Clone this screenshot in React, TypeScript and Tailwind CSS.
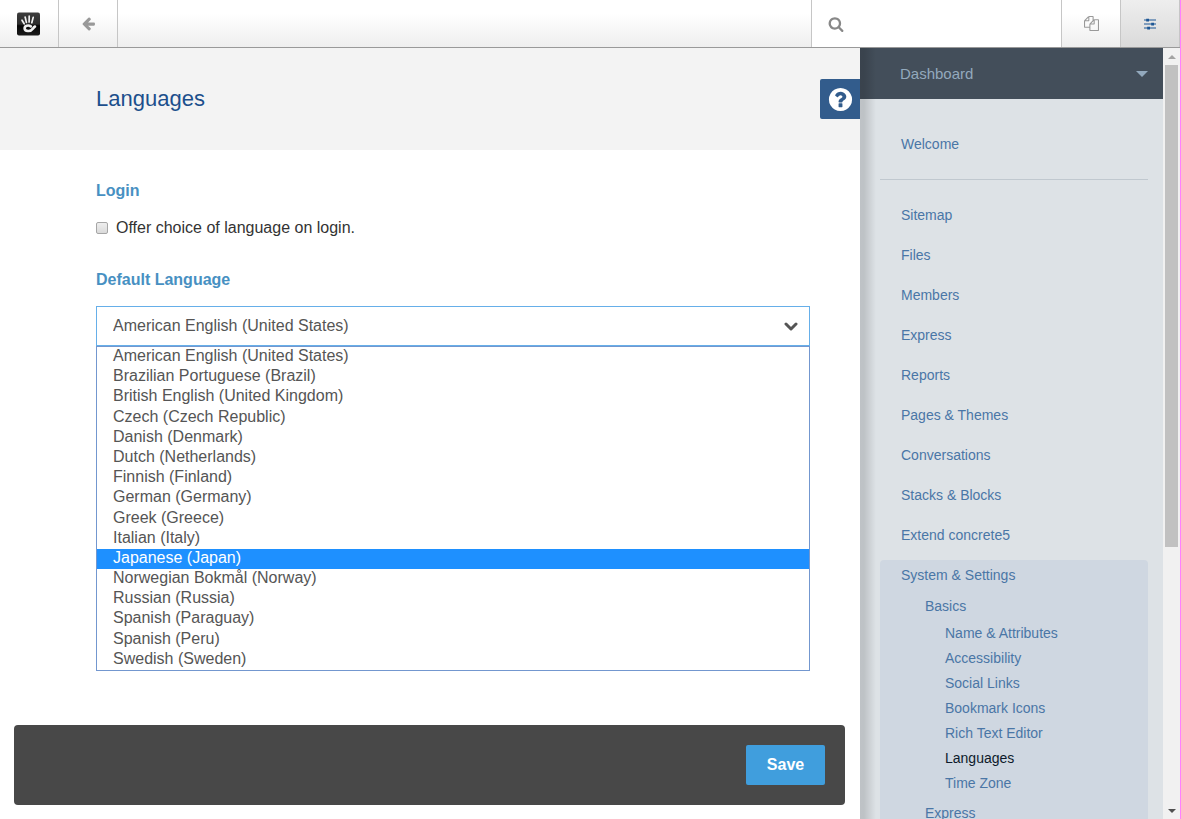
import { useState } from "react"
import type { ReactNode } from "react"

const languages = [
  "American English (United States)",
  "Brazilian Portuguese (Brazil)",
  "British English (United Kingdom)",
  "Czech (Czech Republic)",
  "Danish (Denmark)",
  "Dutch (Netherlands)",
  "Finnish (Finland)",
  "German (Germany)",
  "Greek (Greece)",
  "Italian (Italy)",
  "Japanese (Japan)",
  "Norwegian Bokmål (Norway)",
  "Russian (Russia)",
  "Spanish (Paraguay)",
  "Spanish (Peru)",
  "Swedish (Sweden)",
]

const sections = [
  "Sitemap",
  "Files",
  "Members",
  "Express",
  "Reports",
  "Pages & Themes",
  "Conversations",
  "Stacks & Blocks",
  "Extend concrete5",
]

const basics = [
  "Name & Attributes",
  "Accessibility",
  "Social Links",
  "Bookmark Icons",
  "Rich Text Editor",
  "Languages",
  "Time Zone",
]

const Icon = ({ d, className }: { d: string; className: string }) => (
  <svg viewBox="0 0 1792 1792" fill="currentColor" className={className} aria-hidden="true">
    <path d={d} />
  </svg>
)

const arrowLeft =
  "M1664 896v128q0 53-32.5 90.5t-84.5 37.5h-704l293 294q38 36 38 90t-38 90l-75 76q-37 37-90 37-52 0-91-37l-651-652q-37-37-37-90 0-52 37-91l651-650q38-38 91-38 52 0 90 38l75 74q38 38 38 91t-38 91l-293 293h704q52 0 84.5 37.5t32.5 90.5z"
const search =
  "M1216 832q0-185-131.5-316.5t-316.5-131.5-316.5 131.5-131.5 316.5 131.5 316.5 316.5 131.5 316.5-131.5 131.5-316.5zm512 832q0 52-38 90t-90 38q-54 0-90-38l-343-342q-179 124-399 124-143 0-273.5-55.5t-225-150-150-225-55.5-273.5 55.5-273.5 150-225 225-150 273.5-55.5 273.5 55.5 225 150 150 225 55.5 273.5q0 220-124 399l343 343q37 37 37 90z"
const files =
  "M1696 384q40 0 68 28t28 68v1216q0 40-28 68t-68 28h-960q-40 0-68-28t-28-68v-288h-544q-40 0-68-28t-28-68v-672q0-40 20-88t48-76l408-408q28-28 76-48t88-20h416q40 0 68 28t28 68v328q68-40 128-40h416zm-544 213l-299 299h299v-299zm-640-384l-299 299h299v-299zm196 647l316-316v-416h-384v416q0 40-28 68t-68 28h-416v640h512v-256q0-40 20-88t48-76zm956 804v-1152h-384v416q0 40-28 68t-68 28h-416v640h896z"
const question =
  "M1024 1376v-192q0-14-9-23t-23-9h-192q-14 0-23 9t-9 23v192q0 14 9 23t23 9h192q14 0 23-9t9-23zm256-672q0-88-55.5-163t-138.5-116-170-41q-243 0-371 213-15 24 8 42l132 100q7 6 19 6 16 0 25-12 53-68 86-92 34-24 86-24 48 0 85.5 26t37.5 59q0 38-20 61t-68 45q-63 28-115.5 86.5t-52.5 125.5v36q0 14 9 23t23 9h192q14 0 23-9t9-23q0-19 21.5-49.5t54.5-49.5q32-18 49-28.5t46-35 44.5-48 28-60.5 12.5-81zm384 192q0 209-103 385.5t-279.5 279.5-385.5 103-385.5-103-279.5-279.5-103-385.5 103-385.5 279.5-279.5 385.5-103 385.5 103 279.5 279.5 103 385.5z"

const Logo = () => (
  <svg viewBox="0 0 24 24" className="size-6" aria-hidden="true">
    <defs>
      <linearGradient id="tile" x1="0" y1="0" x2="0" y2="1">
        <stop offset="0" stopColor="#3c3c3c" />
        <stop offset="0.5" stopColor="#2c2c2c" />
        <stop offset="0.58" stopColor="#050505" />
        <stop offset="1" stopColor="#1c1c1c" />
      </linearGradient>
    </defs>
    <rect y="0.5" width="23" height="23" rx="2" fill="url(#tile)" />
    <g fill="none" stroke="#f0f0f0" strokeLinecap="round">
      <path d="M5 8.2 7.2 11.8" strokeWidth="1.7" />
      <path d="M8.2 5.2 9.4 10.4" strokeWidth="1.7" />
      <path d="M12.2 4.2 12.1 10" strokeWidth="1.7" />
      <path d="M16.2 5.4 14.8 10.8" strokeWidth="1.7" />
      <path d="M13.8 14.4C11.6 12.8 7.6 13.4 7.6 16.2 7.7 19.7 13.6 20 15.8 16.8 16.5 15.6 17 15 18 14.5" strokeWidth="2.6" />
    </g>
  </svg>
)

const ToolbarButton = ({ label, className, children }: { label: string; className: string; children: ReactNode }) => (
  <button
    type="button"
    aria-label={label}
    className={`flex shrink-0 items-center justify-center border-[#c6c6c6] ${className}`}
  >
    {children}
  </button>
)

const Toolbar = () => (
  <header className="flex h-12 shrink-0 border-b border-[#999999] bg-linear-to-b from-white from-30% to-[#eeeeee]">
    <ToolbarButton label="concrete5" className="w-[59px] border-r">
      <Logo />
    </ToolbarButton>
    <ToolbarButton label="Back" className="w-[59px] border-r text-[#999999]">
      <Icon d={arrowLeft} className="size-[15px]" />
    </ToolbarButton>
    <div className="flex-1" />
    <label className="flex w-[250px] items-center border-l border-[#c6c6c6] bg-white pl-4 text-[#888888]">
      <Icon d={search} className="size-4 shrink-0" />
      <input type="search" aria-label="Search" className="ml-2 h-8 min-w-0 flex-1 outline-none" />
    </label>
    <ToolbarButton label="Pages" className="w-[59px] border-l text-[#999999]">
      <Icon d={files} className="size-[15px]" />
    </ToolbarButton>
    <ToolbarButton label="Dashboard" className="w-[60px] border-x bg-linear-to-b from-[#eeeeee] to-[#dadada] text-[#1c5695]">
      <svg viewBox="0 0 12 12" fill="currentColor" className="size-3" aria-hidden="true">
        <path d="M0 1.5h12v1.1H0zM0 5.5h12v1.1H0zM0 9.5h12v1.1H0z" />
        <path d="M2.2 .8h2.8v2.6H2.200zM7.200 4.8h2.800v2.600H7.200zM3.200 8.800h2.800v2.600H3.200z" />
      </svg>
    </ToolbarButton>
  </header>
)

const Sidebar = () => (
  <aside className="relative w-[303px] shrink-0 overflow-hidden bg-[#dde2e6] text-sm text-[#4a76a6]">
    <button
      type="button"
      className="flex h-[51px] w-full items-center justify-between bg-[#434e5a] pr-[15px] pl-10 text-[15px] text-[#93a9bd]"
    >
      Dashboard
      <svg viewBox="0 0 12 6" fill="currentColor" className="h-[6px] w-3" aria-hidden="true">
        <path d="M0 0h12L6 6z" />
      </svg>
    </button>
    <nav className="pt-[25px] pr-[15px] pl-5">
      <a href="#" className="block pl-[21px] leading-10">Welcome</a>
      <hr className="my-[15px] border-[#c0c8cf]" />
      <ul>
        {sections.map((name) => (
          <li key={name}>
            <a href="#" className="block pl-[21px] leading-10">{name}</a>
          </li>
        ))}
      </ul>
      <div className="mt-[5px] rounded bg-[#cfd7e1] pb-10">
        <a href="#" className="block pl-[21px] leading-[30px]">System &amp; Settings</a>
        <a href="#" className="block pl-[45px] leading-8">Basics</a>
        <ul className="-mt-px mb-px">
          {basics.map((name) => (
            <li key={name}>
              <a
                href="#"
                className={name === "Languages" ? "block pl-[65px] leading-[25px] text-[#0d1a2b]" : "block pl-[65px] leading-[25px]"}
              >
                {name}
              </a>
            </li>
          ))}
        </ul>
        <a href="#" className="block pl-[45px] leading-8">Express</a>
      </div>
    </nav>
    {/* shadow cast by the page over the panel */}
    <div className="pointer-events-none absolute inset-y-0 left-0 w-4 bg-linear-to-r from-black/14 from-25% to-transparent" />
  </aside>
)

const Scrollbar = () => (
  <div className="flex w-[17px] shrink-0 flex-col items-center justify-between bg-[#f1f1f1]" aria-hidden="true">
    <div className="flex h-[17px] items-center">
      <svg viewBox="0 0 8 4" className="h-1 w-2" fill="#a3a3a3"><path d="M0 4h8L4 0z" /></svg>
    </div>
    <div className="flex w-[13px] flex-1 flex-col">
      <div className="h-17/26 bg-[#c1c1c1]" />
    </div>
    <div className="flex h-[17px] items-center">
      <svg viewBox="0 0 8 4" className="h-1 w-2" fill="#505050"><path d="M0 0h8L4 4z" /></svg>
    </div>
  </div>
)

const LanguageSelect = () => {
  const [value, setValue] = useState(languages[0])

  return (
    <div className="relative mt-4">
      <select
        id="language"
        value={value}
        onChange={(e) => setValue(e.target.value)}
        className="block h-10 w-full appearance-none border border-[#66afe9] bg-white px-4 text-[#555555] outline-none"
      >
        {languages.map((name) => (
          <option key={name}>{name}</option>
        ))}
      </select>
      <svg
        viewBox="0 0 14 9"
        className="pointer-events-none absolute top-4 right-3 h-[9px] w-[14px]"
        fill="none"
        stroke="#555555"
        strokeWidth="3"
        strokeLinecap="round"
        strokeLinejoin="round"
        aria-hidden="true"
      >
        <path d="M2 2l5 5 5-5" />
      </svg>
      <ul
        role="listbox"
        aria-label="Default Language"
        className="absolute inset-x-0 top-full flex h-[325px] flex-col border border-[#7397cf] bg-white text-[#555555]"
      >
        {languages.map((name) => (
          <li
            key={name}
            role="option"
            aria-selected={name === "Japanese (Japan)"}
            className={
              name === "Japanese (Japan)"
                ? "flex-1 bg-[#1e90ff] px-4 leading-[18px] text-white"
                : "flex-1 px-4 leading-[18px]"
            }
          >
            {name}
          </li>
        ))}
      </ul>
    </div>
  )
}

const App = () => {
  return (
    <div className="flex h-screen overflow-hidden bg-white font-['Liberation_Sans',Arial,sans-serif] text-base">
      <div className="flex min-w-0 flex-1 flex-col">
        <Toolbar />
        <div className="flex min-h-0 flex-1">
          <main className="relative flex min-w-0 flex-1 flex-col">
            <div className="bg-[#f3f3f3] py-[35px] pl-24">
              <h1 className="text-[22px] leading-8 text-[#1c4f8c]">Languages</h1>
            </div>
            <button
              type="button"
              aria-label="Help"
              className="absolute top-[31px] right-0 flex size-10 items-center justify-center rounded-l-xs bg-[#325c8c] text-white"
            >
              <Icon d={question} className="size-[27px]" />
            </button>

            <form className="flex flex-1 flex-col">
              <div className="flex-1 pt-[31px] pr-[50px] pl-24 leading-5">
                <h2 className="font-bold text-[#4790c2]">Login</h2>
                <label className="mt-[17px] flex items-center gap-2 text-[#333333]">
                  <input
                    type="checkbox"
                    className="size-3 appearance-none rounded-xs border border-[#a6a6a6] bg-linear-to-b from-[#eeeeee] to-[#dadada] checked:bg-[#4790c2]"
                  />
                  Offer choice of language on login.
                </label>
                <label htmlFor="language" className="mt-8 block font-bold text-[#4790c2]">
                  Default Language
                </label>
                <LanguageSelect />
              </div>
              <div className="mr-[15px] mb-[14px] ml-[14px] flex justify-end rounded bg-[#484848] p-5">
                <button type="submit" className="h-10 w-[79px] rounded-xs bg-[#409edd] font-bold text-white">
                  Save
                </button>
              </div>
            </form>
          </main>
          <Sidebar />
          <Scrollbar />
        </div>
      </div>
      <div className="w-px bg-[#ff80ff]" />
    </div>
  )
}

export default App
